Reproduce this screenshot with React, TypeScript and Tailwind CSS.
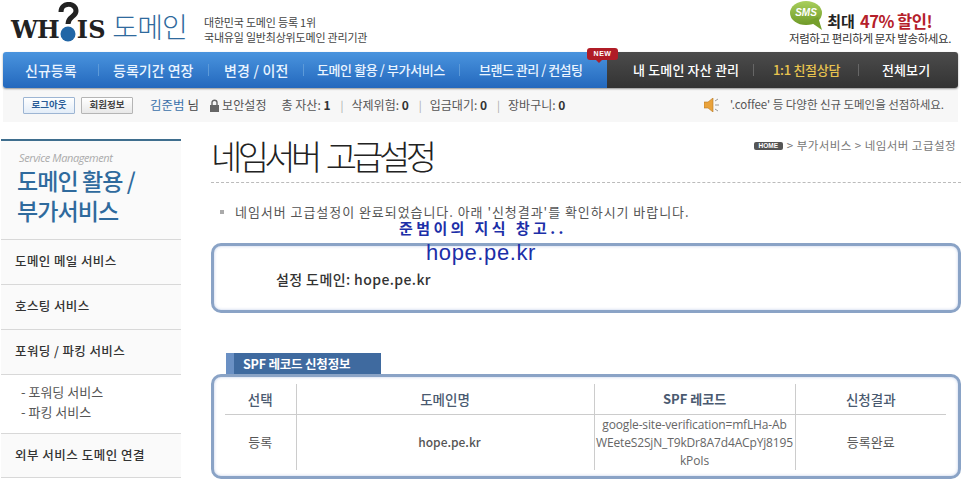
import React from 'react'

const ko = "font-['Noto_Sans_CJK_KR','Liberation_Sans',sans-serif]"

const Logo = () => (
  <div className="flex items-start w-[190px] h-[52px] pl-[11px]">
    <span className="font-['DejaVu_Serif',serif] font-bold text-[24px] leading-none text-[#222] tracking-[-1px] mt-[18px]">WH</span>
    <svg width="22" height="42" viewBox="0 0 22 42" className="-ml-[2px] mt-[2px] shrink-0">
      <path d="M4 10 C4 0 19 0 19 9 C19 15 11 14 11 22" fill="none" stroke="#222" strokeWidth="5" />
      <circle cx="11" cy="32" r="7.5" fill="#2166a6" />
    </svg>
    <span className="font-['DejaVu_Serif',serif] font-bold text-[24px] leading-none text-[#222] tracking-[0.5px] -ml-[2px] mt-[18px]">IS</span>
    <span className="text-[28px] leading-none text-[#2f6a9d] ml-[6px] mt-[12px] whitespace-nowrap tracking-[-0.8px] font-light">도메인</span>
  </div>
)

const SmsBubble = () => (
  <svg width="36" height="30" viewBox="0 0 36 30">
    <defs>
      <linearGradient id="sms" x1="0" y1="0" x2="0" y2="1">
        <stop offset="0" stopColor="#a9cf5c" />
        <stop offset="1" stopColor="#6f9a28" />
      </linearGradient>
    </defs>
    <ellipse cx="17" cy="12" rx="16" ry="12" fill="url(#sms)" />
    <path d="M20 20 L33 29 L29 16 Z" fill="#759f2c" />
    <text x="17" y="15" textAnchor="middle" fontSize="10" fontWeight="700" fontStyle="italic" fill="#fff" fontFamily="Liberation Sans">SMS</text>
  </svg>
)

const Speaker = () => (
  <svg width="16" height="14" viewBox="0 0 16 14">
    <path d="M0 4 H4 L9 0 V14 L4 10 H0 Z" fill="#e9a23b" stroke="#b97a22" strokeWidth="0.6" />
    <path d="M11 3 L14 1 M11 7 H15 M11 11 L14 13" stroke="#999" strokeWidth="1" />
  </svg>
)

const Lock = () => (
  <svg width="11" height="13" viewBox="0 0 11 13">
    <path d="M3 6 V3.5 C3 0.5 8 0.5 8 3.5 V6" fill="none" stroke="#666" strokeWidth="1.4" />
    <rect x="1" y="6" width="9" height="7" fill="#666" />
  </svg>
)

const NavSep = () => <span className="w-px h-[12px] bg-[#5d9ad8]" />
const DarkSep = () => <span className="w-px h-[12px] bg-[#666]" />
const StatSep = () => <span className="ml-[10px] mr-[8px] text-[#aaa] text-[11px]">|</span>

const Header = () => (
  <div className="flex items-start h-[52px]">
    <Logo />
    <div className="text-[11px] leading-[15px] text-[#444] mt-[15px] ml-[14px] tracking-[-0.2px]">
      <p>대한민국 도메인 등록 1위</p>
      <p>국내유일 일반최상위도메인 관리기관</p>
    </div>
    <div className="ml-auto mr-[14px] flex flex-col items-end">
      <div className="flex items-end h-[31px] mr-[19px]">
        <SmsBubble />
        <span className="text-[15px] font-bold text-[#222] leading-[20px] ml-[2px]">최대</span>
        <span className="text-[16.5px] font-bold text-[#b5202a] leading-[20px] ml-[5px] tracking-[-0.5px]">47% 할인!</span>
      </div>
      <p className="text-[11.5px] leading-[14px] text-[#333] tracking-[-0.4px]">저렴하고 편리하게 문자 발송하세요.</p>
    </div>
  </div>
)

const Nav = () => (
  <div className="relative flex h-[36px] ml-[3px] mr-[7px] rounded-[3px] shadow-[0_1px_2px_rgba(0,0,0,0.4)]">
    <div className="flex items-center w-[604px] rounded-l-[3px] bg-gradient-to-b from-[#4a94de] to-[#2368bd] text-[14px] font-medium text-[#eaf4ff] whitespace-nowrap">
      <span className="ml-[22px] w-[73px]">신규등록</span>
      <NavSep />
      <span className="ml-[14px] w-[95px]">등록기간 연장</span>
      <NavSep />
      <span className="ml-[15px] w-[79px] tracking-[0.2px]">변경 / 이전</span>
      <NavSep />
      <span className="ml-[13px] w-[142px] text-[13px] tracking-[-0.4px]">도메인 활용 / 부가서비스</span>
      <NavSep />
      <span className="ml-[19px] text-[13px] tracking-[-0.5px]">브랜드 관리 / 컨설팅</span>
    </div>
    <div className="flex items-center flex-1 rounded-r-[3px] bg-gradient-to-b from-[#4c4c4c] to-[#333] text-[13px] font-medium text-white whitespace-nowrap">
      <span className="ml-[26px] w-[120px] tracking-[0.15px]">내 도메인 자산 관리</span>
      <DarkSep />
      <span className="ml-[19px] w-[85px] text-[#e8c34f] tracking-[-0.3px]">1:1 친절상담</span>
      <DarkSep />
      <span className="ml-[23px] tracking-[0.1px]">전체보기</span>
    </div>
    <span className="absolute left-[584px] -top-[4px] h-[12px] w-[31px] rounded-[3px] bg-[#b01c26] text-white font-['Liberation_Sans',sans-serif] font-bold text-[7px] leading-[12px] text-center tracking-[0.5px]">
      NEW
      <span className="absolute left-[8px] top-[11px] border-x-[4px] border-t-[4px] border-x-transparent border-t-[#b01c26]" />
    </span>
  </div>
)

const SubBar = () => (
  <div className="flex items-center h-[34px] ml-[3px] mr-[7px] bg-[#f7f7f7] text-[12px] text-[#555] whitespace-nowrap">
    <button className="ml-[20px] w-[52px] h-[17px] border border-[#9db5d3] bg-gradient-to-b from-white to-[#e3edf8] text-[9.5px] font-bold leading-none text-[#2a5c97] rounded-[1px]">로그아웃</button>
    <button className="ml-[6px] w-[52px] h-[17px] border border-[#b5b5b5] bg-gradient-to-b from-white to-[#e8e8e8] text-[9.5px] font-bold leading-none text-[#444] rounded-[1px]">회원정보</button>
    <span className="ml-[17px] text-[12.5px] text-[#3b72ab]">김준범</span>
    <span className="ml-[3px] text-[12.5px] text-[#444]">님</span>
    <span className="ml-[10px]"><Lock /></span>
    <span className="ml-[2px] tracking-[0.1px]">보안설정</span>
    <span className="ml-[15px]">총 자산: <b className="text-[#333]">1</b></span>
    <StatSep />
    <span>삭제위험: <b className="text-[#333]">0</b></span>
    <StatSep />
    <span>입금대기: <b className="text-[#333]">0</b></span>
    <StatSep />
    <span>장바구니: <b className="text-[#333]">0</b></span>
    <span className="ml-auto"><Speaker /></span>
    <span className="ml-[10px] mr-[14px] text-[11.5px] tracking-[-0.05px]">'.coffee' 등 다양한 신규 도메인을 선점하세요.</span>
  </div>
)

const sideItems = ['도메인 메일 서비스', '호스팅 서비스', '포워딩 / 파킹 서비스']

const Sidebar = () => (
  <aside className="w-[180px] ml-px mt-[17px] shrink-0">
    <div className="h-[100px] border-t-[2px] border-[#3f6e8e] bg-[#fafafa] pl-[18px] pt-[10px]">
      <p className="font-['Open_Sans',sans-serif] italic text-[11px] leading-[14px] text-[#aaa] tracking-[-0.4px]">Service Management</p>
      <p className="text-[23px] leading-[30px] font-medium text-[#2f6a9d] -ml-[2px] tracking-[-0.9px]">도메인 활용 /<br />부가서비스</p>
    </div>
    {sideItems.map(item => (
      <div key={item} className="h-[45px] flex items-center pl-[14px] pb-[2px] border-t border-[#d8d8d8] bg-[#fafafa] text-[12.5px] font-medium text-[#333] tracking-[0.4px]">{item}</div>
    ))}
    <div className="h-[59px] border-t border-[#d8d8d8] pl-[20px] pt-[7px] text-[13px] leading-[20px] text-[#555]">
      <p>- 포워딩 서비스</p>
      <p>- 파킹 서비스</p>
    </div>
    <div className="h-[45px] flex items-center pl-[14px] border-y border-[#d8d8d8] bg-[#fafafa] text-[12.5px] font-medium text-[#333] tracking-[0.5px]">외부 서비스 도메인 연결</div>
  </aside>
)

const boxCls = 'rounded-[10px] border-[3px] border-[#8aa3c6] bg-white shadow-[inset_0_0_3px_rgba(120,150,210,0.5)]'

const Main = () => (
  <main className="relative w-[750px] ml-[30px]">
    <div className="h-[61px] border-b border-dashed border-[#bbb] flex justify-between">
      <h1 className="text-[34px] leading-[44px] mt-[12px] text-[#222] font-light tracking-[-4.6px] [word-spacing:5px] whitespace-nowrap">네임서버 고급설정</h1>
      <div className="flex items-center h-[12px] mt-[18px] mr-[5px] text-[11.5px] text-[#777] tracking-[0.45px] whitespace-nowrap">
        <span className="h-[8px] w-[29px] rounded-[2px] bg-[#555] text-white font-['Liberation_Sans',sans-serif] font-bold text-[6.5px] leading-[8px] text-center tracking-normal">HOME</span>
        <span className="ml-[4px]">&gt; 부가서비스 &gt; 네임서버 고급설정</span>
      </div>
    </div>
    <p className="mt-[21px] ml-[9px] flex items-center text-[13px] leading-[16px] text-[#555] tracking-[0.95px] whitespace-nowrap">
      <span className="w-[4px] h-[4px] bg-[#aaa] mr-[11px]" />
      네임서버 고급설정이 완료되었습니다. 아래 '신청결과'를 확인하시기 바랍니다.
    </p>
    <div className={`${boxCls} h-[70px] mt-[23px] pl-[62px] pt-[23px] text-[14px] leading-[20px] font-medium text-[#333] tracking-[0.4px]`}>
      설정 도메인: hope.pe.kr
    </div>
    <div className="mt-[40px] ml-[15px] w-[155px] h-[22px] bg-[#3f6a9f] border-l-[8px] border-[#6a90c4] pl-[9px] text-white text-[12.5px] font-bold leading-[22px] tracking-[-0.2px]">
      SPF 레코드 신청정보
    </div>
    <div className={`${boxCls} h-[105px] -mt-px pl-[11px] pt-[7px]`}>
      <table className="w-[721px] table-fixed border-collapse text-[13px] text-[#555]">
        <colgroup>
          <col className="w-[71px]" />
          <col className="w-[298px]" />
          <col className="w-[201px]" />
          <col />
        </colgroup>
        <thead>
          <tr className="h-[30px] border-b border-[#ccc] text-[#4a5a70]">
            <th className="text-[13.5px] font-medium border-r border-[#ccc]">선택</th>
            <th className="text-[13.5px] font-medium border-r border-[#ccc]">도메인명</th>
            <th className="font-bold border-r border-[#ccc]">SPF 레코드</th>
            <th className="text-[13.5px] font-medium">신청결과</th>
          </tr>
        </thead>
        <tbody>
          <tr className="h-[55px] text-center">
            <td className="border-r border-[#ccc]">등록</td>
            <td className="border-r border-[#ccc] pl-[9px] text-[12px] font-medium">hope.pe.kr</td>
            <td className="border-r border-[#ccc] pt-[1px] font-['Open_Sans',sans-serif] text-[12px] leading-[18px] text-[#666] tracking-[-0.15px] whitespace-nowrap overflow-hidden">google-site-verification=mfLHa-Ab<br />WEeteS2SjN_T9kDr8A7d4ACpYj8195<br />kPoIs</td>
            <td>등록완료</td>
          </tr>
        </tbody>
      </table>
    </div>
    <div className="absolute left-[188px] top-[98px] text-[#1c2fa8] font-bold">
      <p className="text-[15px] leading-[16px] tracking-[3.4px] whitespace-nowrap">준범이의 지식 창고..</p>
      <p className="font-['Liberation_Sans',sans-serif] font-normal text-[22px] leading-[24px] tracking-[0.6px] ml-[27px] mt-[5px]">hope.pe.kr</p>
    </div>
  </main>
)

export default function App() {
  return (
    <div className={`${ko} w-[965px] h-[485px] overflow-hidden bg-white`}>
      <Header />
      <Nav />
      <SubBar />
      <div className="flex">
        <Sidebar />
        <Main />
      </div>
    </div>
  )
}
